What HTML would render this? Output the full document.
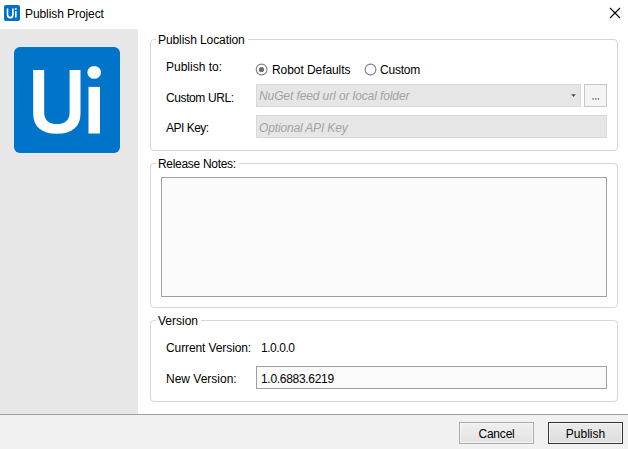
<!DOCTYPE html>
<html>
<head>
<meta charset="utf-8">
<style>
html,body{margin:0;padding:0;}
body{width:628px;height:449px;position:relative;overflow:hidden;background:#fff;font-family:"Liberation Sans",sans-serif;font-size:12px;color:#000;}
.a{position:absolute;white-space:nowrap;}
.t{position:absolute;white-space:nowrap;line-height:14px;}
.side{left:0;top:29px;width:138px;height:385px;background:#e7e7e7;}
.footer{left:0;top:414px;width:628px;height:35px;background:#f1f1f1;border-top:1px solid #a0a0a0;box-sizing:border-box;}
.gb{position:absolute;left:150px;width:468px;box-sizing:border-box;border:1px solid #d6d6db;border-radius:4px;}
.gbt{position:absolute;background:#fff;padding:0 3px 0 2px;line-height:14px;white-space:nowrap;}
.dis{position:absolute;box-sizing:border-box;background:#e6e6e6;border:1px solid #d9d9d9;}
.ph{position:absolute;font-style:italic;color:#a3a3a3;white-space:nowrap;line-height:14px;}
.btn{position:absolute;box-sizing:border-box;height:22px;background:linear-gradient(#efefef,#e3e3e3);box-shadow:inset 0 0 0 1px #f4f4f4;border:1px solid #acacac;text-align:center;line-height:22px;}
</style>
</head>
<body>
<!-- title bar -->
<svg class="a" style="left:4px;top:5px" width="16" height="16" viewBox="0 0 16 16">
  <rect x="0" y="0" width="16" height="16" rx="2" fill="#0071c5"/>
  <path d="M3.5 3.5 V9.5 Q3.5 12.6 6.2 12.6 Q8.9 12.6 8.9 9.5 V3.5" fill="none" stroke="#fff" stroke-width="1.6"/>
  <rect x="11" y="6" width="1.6" height="6.6" fill="#fff"/>
  <circle cx="11.8" cy="4" r="1" fill="#fff"/>
</svg>
<div class="t" style="left:25px;top:7px;letter-spacing:-0.08px;">Publish Project</div>
<svg class="a" style="left:609px;top:7px" width="12" height="12" viewBox="0 0 12 12">
  <path d="M1 1 L11 11 M11 1 L1 11" stroke="#000" stroke-width="1.1"/>
</svg>

<!-- sidebar -->
<div class="a side"></div>
<svg class="a" style="left:14px;top:47px" width="106" height="106" viewBox="0 0 106 106">
  <rect x="0" y="0" width="106" height="106" rx="6" fill="#0074c8"/>
  <path d="M19.2 23 V66.5 C19.2 79.7 27.5 86.8 42.85 86.8 C58.2 86.8 66.5 79.7 66.5 66.5 V23 H55.6 V65.4 C55.6 72.9 51.16 77 42.9 77 C34.64 77 30.2 72.9 30.2 65.4 V23 Z" fill="#fff"/>
  <rect x="74.5" y="39.9" width="11.5" height="46.6" fill="#fff"/>
  <ellipse cx="80.2" cy="25.4" rx="6.8" ry="6.4" fill="#fff"/>
</svg>

<!-- footer -->
<div class="a footer"></div>
<div class="btn" style="left:459px;top:422px;width:75px;letter-spacing:-0.2px;">Cancel</div>
<div class="btn" style="left:548px;top:422px;width:75px;border-color:#383838;background:linear-gradient(#ebebeb,#dddddd);">Publish</div>

<!-- group 1 -->
<div class="gb" style="top:39px;height:112px;"></div>
<div class="gbt" style="left:156px;top:33px;letter-spacing:-0.09px;">Publish Location</div>
<div class="t" style="left:166px;top:60px;">Publish to:</div>
<svg class="a" style="left:255px;top:63px" width="13" height="13" viewBox="0 0 13 13">
  <circle cx="6.6" cy="6.5" r="5.4" fill="#fff" stroke="#7e7e7e" stroke-width="1.1"/>
  <circle cx="6.5" cy="6.5" r="2.6" fill="#6b6b6b"/>
</svg>
<div class="t" style="left:272px;top:63px;letter-spacing:-0.07px;">Robot Defaults</div>
<svg class="a" style="left:364px;top:63px" width="13" height="13" viewBox="0 0 13 13">
  <circle cx="6.5" cy="6.5" r="5.4" fill="#fff" stroke="#7e7e7e" stroke-width="1.1"/>
</svg>
<div class="t" style="left:380px;top:63px;letter-spacing:-0.23px;">Custom</div>

<div class="t" style="left:166px;top:91px;letter-spacing:-0.4px;">Custom URL:</div>
<div class="dis" style="left:256px;top:84px;width:325px;height:23px;"></div>
<div class="ph" style="left:259px;top:89px;letter-spacing:-0.1px;">NuGet feed url or local folder</div>
<svg class="a" style="left:570px;top:93px" width="7" height="5" viewBox="0 0 7 5"><path d="M1.2 1.3 H5.8 L3.5 3.9 Z" fill="#4a4a4a"/></svg>
<div class="a" style="left:584px;top:84px;width:23px;height:23px;box-sizing:border-box;background:#f4f4f4;border:1px solid #c8c8c8;"></div>
<svg class="a" style="left:590px;top:96px" width="12" height="5" viewBox="0 0 12 5"><rect x="2.4" y="2.2" width="1.4" height="1.5" fill="#6c6c6c"/><rect x="5.1" y="2.2" width="1.4" height="1.5" fill="#6c6c6c"/><rect x="7.8" y="2.2" width="1.4" height="1.5" fill="#6c6c6c"/></svg>

<div class="t" style="left:166px;top:121px;letter-spacing:-0.5px;">API Key:</div>
<div class="dis" style="left:256px;top:115px;width:351px;height:23px;"></div>
<div class="ph" style="left:259px;top:121px;letter-spacing:-0.15px;">Optional API Key</div>

<!-- group 2 -->
<div class="gb" style="top:163px;height:145px;"></div>
<div class="gbt" style="left:156px;top:157px;letter-spacing:-0.3px;">Release Notes:</div>
<div class="a" style="left:161px;top:177px;width:446px;height:120px;box-sizing:border-box;background:#fbfbfb;border:1px solid #a0a0a0;"></div>

<!-- group 3 -->
<div class="gb" style="top:320px;height:82px;"></div>
<div class="gbt" style="left:156px;top:314px;">Version</div>
<div class="t" style="left:166px;top:341px;letter-spacing:-0.1px;">Current Version:</div>
<div class="t" style="left:261px;top:341px;letter-spacing:-0.45px;">1.0.0.0</div>
<div class="t" style="left:166px;top:372px;">New Version:</div>
<div class="a" style="left:256px;top:366px;width:351px;height:23px;box-sizing:border-box;background:#fafafa;border:1px solid #a0a0a0;"></div>
<div class="t" style="left:261px;top:372px;letter-spacing:-0.3px;">1.0.6883.6219</div>
</body>
</html>
